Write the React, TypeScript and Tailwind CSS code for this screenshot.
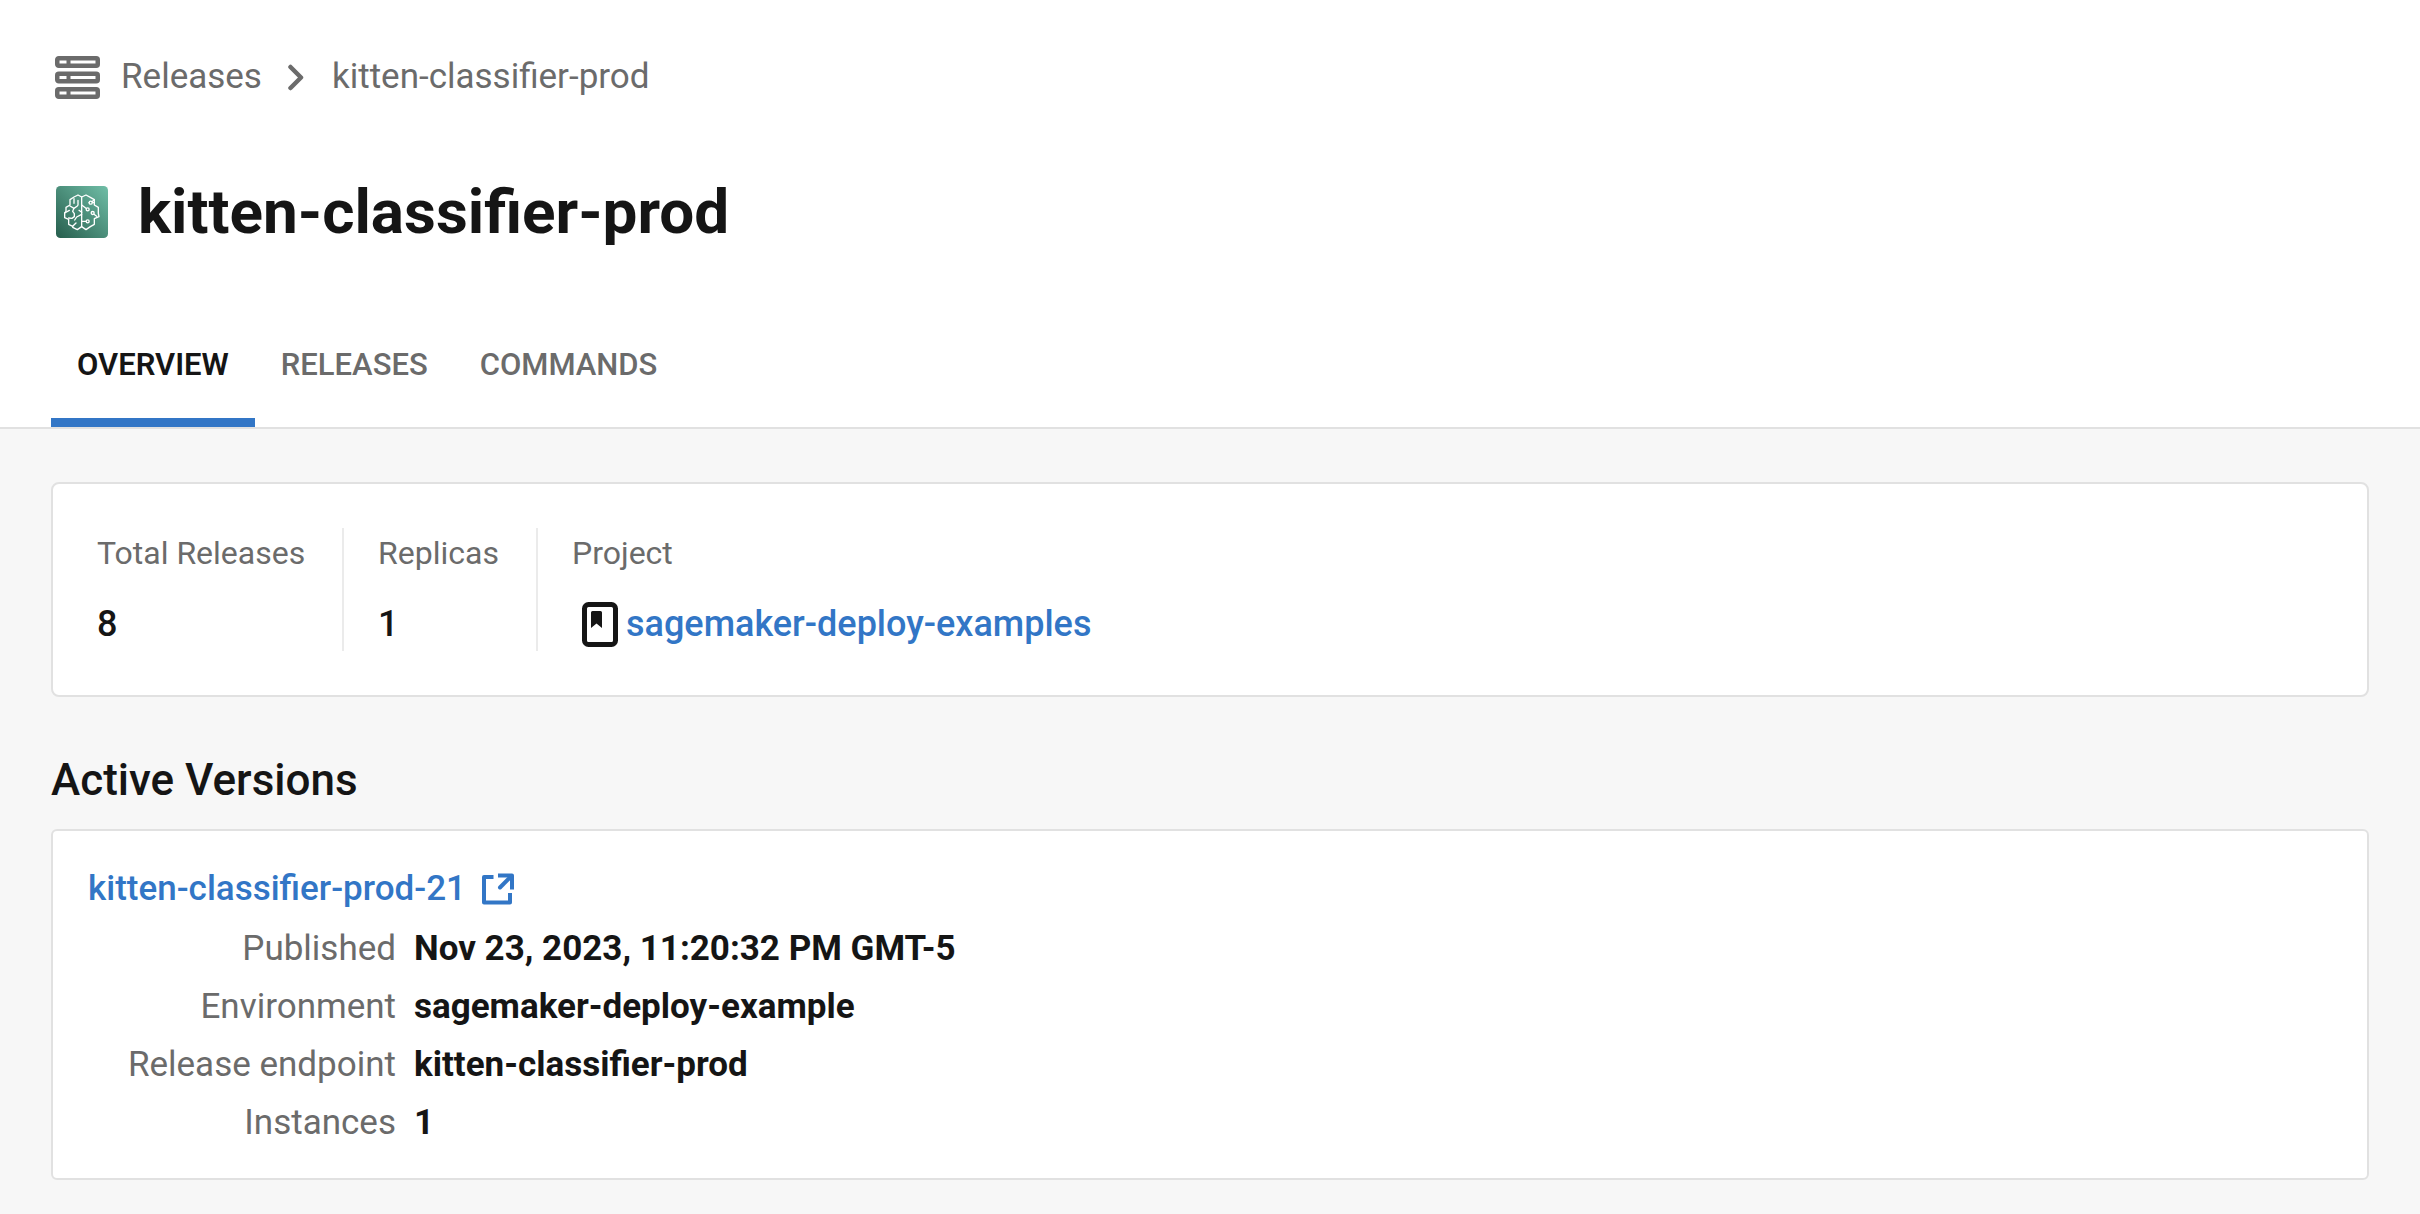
import type { ReactNode } from "react";

function ServerIcon() {
  return (
    <svg width="45" height="43" viewBox="0 0 45 43" fill="none" stroke="currentColor" aria-hidden="true">
      {[0, 15.5, 31].map((y) => (
        <g key={y}>
          <rect x="2.25" y={y + 2.25} width="40.5" height="7.500" rx="1.5" strokeWidth="4.5" />
          <path d={`M13.5 ${y + 3}v6`} strokeWidth="4" />
        </g>
      ))}
    </svg>
  );
}

function ChevronIcon() {
  return (
    <svg width="16" height="27" viewBox="0 0 16 27" fill="none" stroke="currentColor" strokeWidth="4.5" strokeLinecap="round" strokeLinejoin="round" aria-hidden="true">
      <path d="M2.5 3 13 13.5 2.5 24" />
    </svg>
  );
}

function BrainLogo() {
  return (
    <svg width="52" height="52" viewBox="0 0 156 156" fill="none" aria-hidden="true">
      <defs>
        <linearGradient id="brain-bg" x1="0" y1="1" x2="1" y2="0">
          <stop offset="0" stopColor="#265e4d" />
          <stop offset="1" stopColor="#70bea7" />
        </linearGradient>
      </defs>
      <rect width="156" height="156" rx="13" fill="url(#brain-bg)" />
      <g stroke="#fff" strokeWidth="4" strokeLinejoin="round" strokeLinecap="round">
        <path d="M77 33 66 27 54 33 42 41V57L30 64V76L26 81V95L38 100V115L50 121V124L64 131 77 122Z" />
        <path d="M77 33 90 27 103 34 115 41V57L127 64V82L129 92 115 98V115L103 122 90 131 77 122" />
        <path d="M54 38V52M64 60 54 67 42 60M66 43V57L64 60M26 81 40 73M54 67 50 76 55 83V92L48 97 38 96M77 85 62 93 56 102M69 73 77 79M50 121 60 111M77 57 90 67M99 50H115M110 82 122 91M77 106H91M115 41 104 50" />
        <circle cx="104" cy="50" r="4.5" fill="#559981" />
        <circle cx="95" cy="70" r="4.5" fill="#4b9079" />
        <circle cx="110" cy="81" r="4.5" fill="#4b9079" />
        <circle cx="95" cy="106" r="4.5" fill="#43836e" />
      </g>
    </svg>
  );
}

function ProjectIcon() {
  return (
    <svg width="36" height="45" viewBox="0 0 36 45" aria-hidden="true">
      <rect x="2.5" y="2.5" width="31" height="40" rx="4" fill="none" stroke="currentColor" strokeWidth="5" />
      <path d="M9 10.5Q9 9 10.5 9h8Q20 9 20 10.5V26l-5.500-4.500L9 26Z" fill="currentColor" />
    </svg>
  );
}

function ExternalIcon() {
  return (
    <svg width="32" height="32" viewBox="0 0 32 32" fill="none" stroke="currentColor" strokeWidth="4" strokeLinejoin="round" aria-hidden="true">
      <path d="M11.500 4H2V29.500H28V20" />
      <path d="M16 2.500H30V16.500" />
      <path d="M29 3.500 18 14.500" strokeLinecap="round" />
    </svg>
  );
}

const tabs = ["Overview", "Releases", "Commands"];

const details = [
  ["Published", "Nov 23, 2023, 11:20:32 PM GMT-5"],
  ["Environment", "sagemaker-deploy-example"],
  ["Release endpoint", "kitten-classifier-prod"],
  ["Instances", "1"],
];

function Stat({ label, className, children }: { label: string; className: string; children: ReactNode }) {
  return (
    <div className={className}>
      <dt className="text-[32px] leading-[50px] text-[#6b6b6b]">{label}</dt>
      <dd className="mt-[19px] flex h-[54px] items-center text-[36px] leading-[42px] font-medium">{children}</dd>
    </div>
  );
}

export default function App() {
  return (
    <div className="min-h-screen bg-[#f7f7f7] font-[Roboto,sans-serif] text-[#151515]">
      <header className="border-b-2 border-[#e1e1e1] bg-white px-[51px] pt-[55px]">
        <nav aria-label="Breadcrumb" className="flex items-center pl-1 text-[35px] leading-[44px] text-[#6b6b6b]">
          <ServerIcon />
          <a href="#releases" className="ml-[21px]">Releases</a>
          <span className="mr-7 ml-[26px]"><ChevronIcon /></span>
          <a href="#kitten-classifier-prod">kitten-classifier-prod</a>
        </nav>
        <div className="mt-[75px] flex items-center gap-[30px] pl-[5px]">
          <BrainLogo />
          <h1 className="text-[62px] leading-[76px] font-bold">kitten-classifier-prod</h1>
        </div>
        <div role="tablist" className="mt-[78px] flex">
          {tabs.map((tab, i) => (
            <button
              key={tab}
              type="button"
              role="tab"
              aria-selected={i === 0}
              className={
                i === 0
                  ? "border-b-[9px] border-[#3276c6] px-[26px] pt-4 pb-[33px] text-[31px] leading-[41px] font-semibold uppercase"
                  : "border-b-[9px] border-transparent px-[26px] pt-4 pb-[33px] text-[31px] leading-[41px] font-medium text-[#6b6b6b] uppercase"
              }
            >
              {tab}
            </button>
          ))}
        </div>
      </header>

      <main className="px-[51px] pt-[53px] pb-8">
        <dl className="flex rounded-lg border-2 border-[#e1e1e1] bg-white px-11 py-11">
          <Stat label="Total Releases" className="min-w-[247px] border-r-2 border-[#ebebeb] pr-[34px]">8</Stat>
          <Stat label="Replicas" className="min-w-[194px] border-r-2 border-[#ebebeb] px-[34px]">1</Stat>
          <Stat label="Project" className="pl-[34px]">
            <span className="mr-2 ml-2.5"><ProjectIcon /></span>
            <a href="#project" className="text-[#3276c6]">sagemaker-deploy-examples</a>
          </Stat>
        </dl>

        <h2 className="mt-[58px] mb-6 text-[44px] leading-[50px] font-medium">Active Versions</h2>

        <section className="rounded-md border-2 border-[#e1e1e1] bg-white px-[35px] pt-[37px] pb-[26px]">
          <a href="#version-21" className="inline-flex items-center gap-4 align-top text-[35px] leading-[42px] font-medium text-[#3276c6]">
            kitten-classifier-prod-21
            <ExternalIcon />
          </a>
          <dl className="mt-2.5 grid grid-cols-[308px_1fr] gap-x-[18px] text-[35px] leading-[58px]">
            {details.map(([label, value]) => (
              <div key={label} className="contents">
                <dt className="text-right text-[#6b6b6b]">{label}</dt>
                <dd className="font-bold">{value}</dd>
              </div>
            ))}
          </dl>
        </section>
      </main>
    </div>
  );
}
